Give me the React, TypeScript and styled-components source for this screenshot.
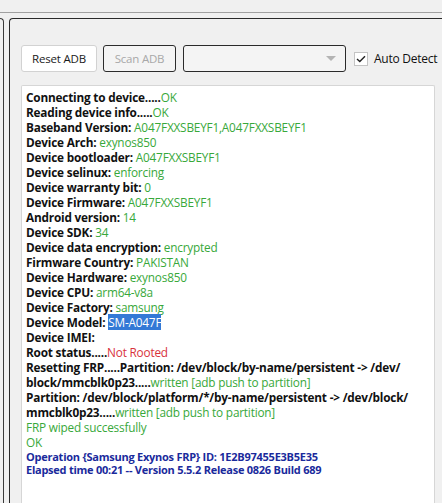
import React from "react";
import styled, { createGlobalStyle } from "styled-components";

const Global = createGlobalStyle`
  html, body { margin: 0; padding: 0; background: #f0f0f0; overflow: hidden; }
  body { width: 442px; height: 503px; font-family: "Open Sans", "Noto Sans", sans-serif; }
`;

const Page = styled.div`
  width: 442px;
  height: 503px;
  display: flex;
  flex-direction: column;
  overflow: hidden;
`;

const TopStrip = styled.div`
  height: 12px;
  border-bottom: 1px solid #a0a0a0;
  flex: none;
`;

const Body = styled.div`
  flex: 1;
  display: flex;
  gap: 5px;
  padding-top: 5px;
  min-height: 0;
`;

const SidePanel = styled.div`
  width: 4px;
  flex: none;
  border: 1px solid #3a3a3a;
  border-left: none;
  border-bottom: none;
  border-top-right-radius: 4px;
  margin-left: -1px;
`;

const MainPanel = styled.div`
  flex: 1;
  margin-right: -20px;
  border: 1px solid #2a2a2a;
  border-right: none;
  border-bottom: none;
  border-top-left-radius: 4px;
  padding: 26px 0 0 11px;
  display: flex;
  flex-direction: column;
  gap: 13px;
  min-height: 0;
`;

const Toolbar = styled.div`
  display: flex;
  align-items: center;
  gap: 6px;
  height: 27px;
`;

const Button = styled.button<{ $disabled?: boolean }>`
  height: 27px;
  box-sizing: border-box;
  padding: 0;
  width: ${(p) => (p.$disabled ? "73px" : "76px")};
  border-radius: 3px;
  border: 1px solid ${(p) => (p.$disabled ? "#2c2c2c" : "#d2d2d2")};
  background: ${(p) => (p.$disabled ? "#f4f4f4" : "#ffffff")};
  color: ${(p) => (p.$disabled ? "#a8a8a8" : "#1a1a1a")};
  font-family: "Open Sans", sans-serif;
  font-size: 11.5px;
  letter-spacing: -0.2px;
`;

const Combo = styled.div`
  width: 163px;
  height: 27px;
  box-sizing: border-box;
  border: 1px solid #2a2a2a;
  border-radius: 3px;
  background: #f4f4f4;
  margin-left: 1px;
  display: flex;
  align-items: center;
  justify-content: flex-end;
  padding-right: 9px;
`;

const Arrow = styled.div`
  width: 0;
  height: 0;
  border-left: 5px solid transparent;
  border-right: 5px solid transparent;
  border-top: 5px solid #b4b4b4;
`;

const CheckLabel = styled.label`
  display: flex;
  align-items: center;
  gap: 6px;
  margin-left: 2px;
  font-family: "Open Sans", sans-serif;
  font-size: 12px;
  letter-spacing: -0.25px;
  color: #111;
  white-space: nowrap;
`;

const Box = styled.span`
  width: 14px;
  height: 14px;
  box-sizing: border-box;
  border: 1px solid #c4c4c4;
  background: #fff;
  display: flex;
  align-items: center;
  justify-content: center;
`;

const Log = styled.div`
  width: 414px;
  flex: 1;
  box-sizing: border-box;
  background: #fff;
  border: 1px solid #d6d6d6;
  border-bottom: none;
  border-radius: 2px 2px 0 0;
  padding: 4px 0 0 4px;
  font-family: "Open Sans", sans-serif;
  font-size: 11.8px;
  letter-spacing: -0.2px;
  white-space: nowrap;
`;

const Line = styled.div<{ $small?: boolean }>`
  height: ${(p) => (p.$small ? "13px" : "15px")};
  line-height: ${(p) => (p.$small ? "13px" : "15px")};
`;

const B = styled.span`
  font-weight: 700;
  color: #111;
`;

const V = styled.span<{ $c?: "g" | "r" }>`
  color: ${(p) => (p.$c === "r" ? "#d8323c" : "#38a83a")};
`;

const Sel = styled.span`
  background: #3379d6;
  color: #fff;
`;

const Blue = styled(B)`
  color: #1a2a9c;
  font-size: 11px;
  letter-spacing: -0.25px;
`;

const info: [string, string][] = [
  ["Baseband Version: ", "A047FXXSBEYF1,A047FXXSBEYF1"],
  ["Device Arch: ", "exynos850"],
  ["Device bootloader: ", "A047FXXSBEYF1"],
  ["Device selinux: ", "enforcing"],
  ["Device warranty bit: ", "0"],
  ["Device Firmware: ", "A047FXXSBEYF1"],
  ["Android version: ", "14"],
  ["Device SDK: ", "34"],
  ["Device data encryption: ", "encrypted"],
  ["Firmware Country: ", "PAKISTAN"],
  ["Device Hardware: ", "exynos850"],
  ["Device CPU: ", "arm64-v8a"],
  ["Device Factory: ", "samsung"],
];

export default function App() {
  return (
    <Page>
      <Global />
      <TopStrip />
      <Body>
        <SidePanel />
        <MainPanel>
          <Toolbar>
            <Button>Reset ADB</Button>
            <Button $disabled>Scan ADB</Button>
            <Combo>
              <Arrow />
            </Combo>
            <CheckLabel>
              <Box>
                <svg width="10" height="8" viewBox="0 0 10 8">
                  <path d="M1 4 L3.8 6.6 L9 1.2" fill="none" stroke="#222" strokeWidth="1.4" />
                </svg>
              </Box>
              Auto Detect
            </CheckLabel>
          </Toolbar>
          <Log>
            <Line><B>Connecting to device.....</B><V>OK</V></Line>
            <Line><B>Reading device info.....</B><V>OK</V></Line>
            {info.map(([k, v]) => (
              <Line key={k}><B>{k}</B><V>{v}</V></Line>
            ))}
            <Line><B>Device Model: </B><Sel>SM-A047F</Sel></Line>
            <Line><B>Device IMEI: </B></Line>
            <Line><B>Root status.....</B><V $c="r">Not Rooted</V></Line>
            <Line><B>Resetting FRP.....Partition: /dev/block/by-name/persistent -&gt; /dev/</B></Line>
            <Line><B>block/mmcblk0p23.....</B><V>written [adb push to partition]</V></Line>
            <Line><B>Partition: /dev/block/platform/*/by-name/persistent -&gt; /dev/block/</B></Line>
            <Line><B>mmcblk0p23.....</B><V>written [adb push to partition]</V></Line>
            <Line><V>FRP wiped successfully</V></Line>
            <Line><V>OK</V></Line>
            <Line $small><Blue>Operation {"{"}Samsung Exynos FRP{"}"} ID: 1E2B97455E3B5E35</Blue></Line>
            <Line $small><Blue>Elapsed time 00:21 -- Version 5.5.2 Release 0826 Build 689</Blue></Line>
          </Log>
        </MainPanel>
      </Body>
    </Page>
  );
}
